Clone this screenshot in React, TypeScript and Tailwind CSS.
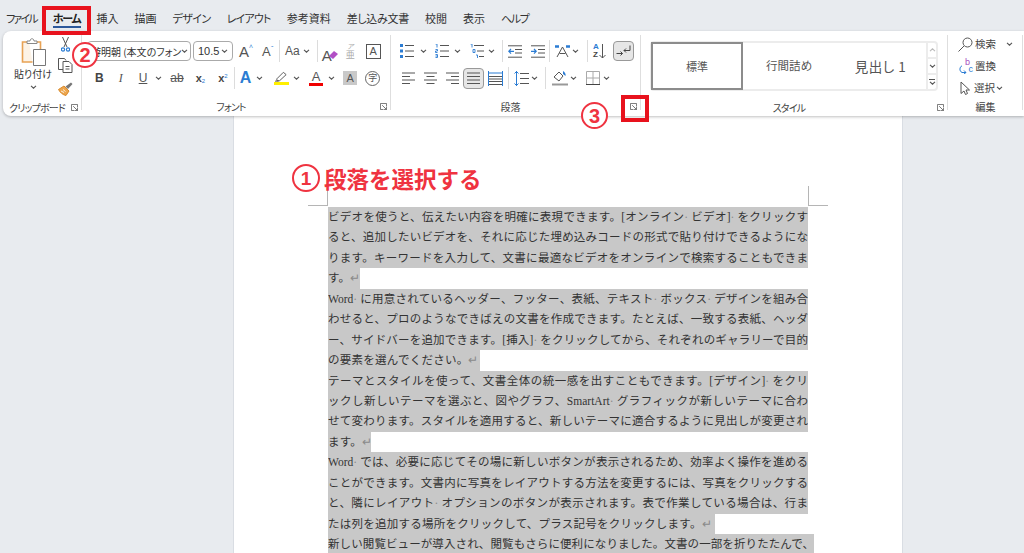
import type { ReactNode } from 'react';

const jp = "font-['Noto_Sans_CJK_JP',sans-serif] [font-feature-settings:'palt']";
const ui = "font-['Liberation_Sans','Noto_Sans_CJK_JP',sans-serif]";

function Caret({ className = '' }: { className?: string }) {
  return (
    <svg viewBox="0 0 7 4" className={`w-[7px] h-[4px] shrink-0 ${className}`} fill="none" stroke="#555" strokeWidth="1.1">
      <path d="M1 .8l2.5 2.4L6 .8" />
    </svg>
  );
}

function Sep({ className = '' }: { className?: string }) {
  return <div className={`w-px h-[22px] bg-[#dcdcdc] shrink-0 ${className}`} />;
}

function GroupSep() {
  return <div className="w-px h-[75px] mt-[4px] bg-[#dedede] shrink-0" />;
}

function Launcher({ className = '' }: { className?: string }) {
  return (
    <svg viewBox="0 0 8 8" className={`w-[7px] h-[7px] shrink-0 ${className}`} fill="none" stroke="#666" strokeWidth="1">
      <path d="M7.5 4V.5H.5v7H4M2.5 2.5l5 5M7.5 4.5v3h-3" />
    </svg>
  );
}

function Label({ text, kana = false }: { text: string; kana?: boolean }) {
  return (
    <div className="flex items-center h-[16px] mt-[9px]">
      <div className={`flex-1 text-center text-[10px] text-[#444] whitespace-nowrap ${kana ? 'tracking-[-0.8px]' : ''} ${jp}`}>{text}</div>
      <Launcher className="mr-[3px]" />
    </div>
  );
}

function Row({ children }: { children: ReactNode }) {
  return <div className="flex items-center h-[22px]">{children}</div>;
}

// paragraph icons
function Lines({ kind, className = '' }: { kind: 'left' | 'center' | 'right' | 'justify'; className?: string }) {
  const d = {
    left: 'M0 1h13M0 4.5h8M0 8h13M0 11.5h8',
    center: 'M0 1h13M2.5 4.5h8M0 8h13M2.5 11.5h8',
    right: 'M0 1h13M5 4.5h8M0 8h13M5 11.5h8',
    justify: 'M0 1h13M0 4.5h13M0 8h13M0 11.5h13',
  }[kind];
  return (
    <svg viewBox="0 0 13 13" className={`w-[13px] h-[13px] shrink-0 ${className}`} fill="none" stroke="#555" strokeWidth="1">
      <path d={d} />
    </svg>
  );
}

function ListIcon({ kind, className = '' }: { kind: 'bullet' | 'number' | 'multi'; className?: string }) {
  return (
    <svg viewBox="0 0 14 14" className={`w-[14px] h-[14px] shrink-0 ${className}`} fill="none">
      {kind === 'bullet' && (
        <>
          <path d="M0 0h3v3H0zM0 5.5h3v3H0zM0 11h3v3H0z" fill="#2b7cd3" />
          <path d="M5 1.5h9M5 7h9M5 12.5h9" stroke="#555" />
        </>
      )}
      {kind === 'number' && (
        <>
          <path d="M.5 0h1.5v3.5M.5 5.5h2v1.5h-2v1.5h2M.5 10.5h2v3h-2M.5 12h2" stroke="#2b7cd3" strokeWidth=".9" />
          <path d="M5 1.5h9M5 7h9M5 12.5h9" stroke="#555" />
        </>
      )}
      {kind === 'multi' && (
        <>
          <path d="M.5 0h1.5v3.5M3 5.5h2v3H3zM6 11h1.5v3" stroke="#2b7cd3" strokeWidth=".9" />
          <path d="M4 1.5h10M7 7h7M9 12.5h5" stroke="#555" />
        </>
      )}
    </svg>
  );
}

function IndentIcon({ out, className = '' }: { out?: boolean; className?: string }) {
  return (
    <svg viewBox="0 0 14 13" className={`w-[14px] h-[13px] shrink-0 ${className}`} fill="none">
      <path d="M0 .8h14M7 4.5h7M7 8h7M0 12.2h14" stroke="#555" />
      <path d={out ? 'M6 6.3H.8M3 4L.8 6.3 3 8.6' : 'M0 6.3h5.2M3 4l2.2 2.3L3 8.6'} stroke="#2b7cd3" strokeWidth="1.2" />
    </svg>
  );
}

function PasteIcon() {
  return (
    <svg viewBox="0 0 25 28" className="w-[25px] h-[28px]" fill="none">
      <path d="M8 4H1.5v20h10" stroke="#e8a254" strokeWidth="1.6" fill="#fdf3e6" />
      <path d="M14 4h5.5v8" stroke="#e8a254" strokeWidth="1.6" />
      <path d="M6 5.5V3h3c0-3 4-3 4 0h3v2.5z" fill="#fff" stroke="#888" />
      <path d="M12.5 11.5h12v16h-12z" fill="#fff" stroke="#777" />
    </svg>
  );
}

function ScissorsIcon() {
  return (
    <svg viewBox="0 0 9 15" className="w-[9px] h-[15px]" fill="none">
      <path d="M1.5 0l4.5 10M7.5 0L3 10" stroke="#555" strokeWidth="1" />
      <circle cx="2" cy="12.5" r="1.6" stroke="#2b7cd3" strokeWidth="1.2" />
      <circle cx="7" cy="12.5" r="1.6" stroke="#2b7cd3" strokeWidth="1.2" />
    </svg>
  );
}

function CopyIcon() {
  return (
    <svg viewBox="0 0 15 15" className="w-[15px] h-[15px]" fill="none" stroke="#555">
      <path d="M5 11.5H.5V.5h6l1.5 2" fill="#fff" />
      <path d="M5 3.5h6l3 3v8H5z" fill="#fff" />
      <path d="M7.5 8.5h4M7.5 11h4" />
    </svg>
  );
}

function BrushIcon() {
  return (
    <svg viewBox="0 0 15 14" className="w-[15px] h-[14px]" fill="none">
      <path d="M.5 7.5L6 4l5 5-3 4.5C5 13 2 10.5.5 7.5z" fill="#eda64d" stroke="#d88a2d" />
      <path d="M7.5 4.5L13 .5l1.5 1.5-4.5 5z" fill="#777" />
      <path d="M3 9l3 1.5M5 7.5l2.5 2" stroke="#fff" strokeWidth=".8" />
    </svg>
  );
}

function A({ className = '', children = 'A' }: { className?: string; children?: ReactNode }) {
  return <span className={`${ui} leading-none shrink-0 ${className}`}>{children}</span>;
}

function Clipboard() {
  return (
    <div className="w-[78px] shrink-0 flex flex-col pt-[7px]">
      <div className="flex h-[61px] pl-[7px]">
        <div className="w-[46px] flex flex-col items-center">
          <PasteIcon />
          <div className={`text-[10px] leading-[14px] mt-[1px] text-[#333] whitespace-nowrap ${jp}`}>貼り付け</div>
          <Caret className="mt-[4px]" />
        </div>
        <div className="w-[18px] flex flex-col items-center -mt-[1px]">
          <ScissorsIcon />
          <div className="mt-[6px]">
            <CopyIcon />
          </div>
          <div className="mt-[9px]">
            <BrushIcon />
          </div>
        </div>
      </div>
      <div className="-mt-[9px]">
        <Label text="クリップボード" kana />
      </div>
    </div>
  );
}

function Font() {
  return (
    <div className="w-[308px] shrink-0 flex flex-col pt-[9px]">
      <div className="flex flex-col gap-[5px]">
        <Row>
          <div className={`ml-[5px] w-[104px] h-[20px] border border-[#aaa] rounded-[4px] bg-white flex items-center justify-between pl-[3px] pr-[4px] text-[10px] text-[#333] whitespace-nowrap ${jp}`}>
            <span>游明朝 (本文のフォン</span>
            <Caret />
          </div>
          <div className={`ml-[2px] w-[40px] h-[20px] border border-[#aaa] rounded-[4px] bg-white flex items-center justify-between px-[4px] text-[11px] text-[#333] ${ui}`}>
            10.5
            <Caret />
          </div>
          <div className="ml-[6px] w-[16px] flex items-start text-[#555]">
            <A className="text-[15px]" />
            <span className="text-[#2b7cd3] text-[7px] leading-none">^</span>
          </div>
          <div className="ml-[7px] w-[14px] flex items-start text-[#555]">
            <A className="text-[13px]" />
            <span className="text-[#2b7cd3] text-[7px] leading-none">ˇ</span>
          </div>
          <Sep className="ml-[3px]" />
          <A className="ml-[5px] text-[12px] text-[#555]">Aa</A>
          <Caret className="ml-[3px]" />
          <Sep className="ml-[7px]" />
          <div className="ml-[4px] w-[16px] h-[16px] relative">
            <A className="text-[15px] text-[#555]" />
            <svg viewBox="0 0 9 8" className="absolute right-0 bottom-0 w-[9px] h-[8px]">
              <path d="M0 5l5-5 4 3-5 5z" fill="#b14fc5" />
            </svg>
          </div>
          <div className="ml-[7px] w-[11px] flex flex-col items-center text-[#aaa]">
            <A className="text-[7px] italic">ア</A>
            <A className={`text-[9px] ${jp}`}>亜</A>
          </div>
          <div className="ml-[10px] w-[15px] h-[15px] border border-[#555] flex items-center justify-center">
            <A className="text-[11px] text-[#555]" />
          </div>
        </Row>
        <Row>
          <A className="ml-[13px] text-[12px] font-bold text-[#444]">B</A>
          <span className="ml-[15px] font-['Liberation_Serif',serif] italic text-[12px] leading-none text-[#555]">I</span>
          <A className="ml-[16px] text-[12px] underline text-[#555]">U</A>
          <Caret className="ml-[8px]" />
          <A className="ml-[8px] text-[12px] line-through text-[#555]">ab</A>
          <div className="ml-[12px] flex items-end">
            <A className="text-[11px] font-bold text-[#444]">x</A>
            <span className={`${ui} text-[6px] leading-none text-[#2b7cd3]`}>2</span>
          </div>
          <div className="ml-[13px] flex items-start">
            <A className="text-[11px] font-bold text-[#444]">x</A>
            <span className={`${ui} text-[6px] leading-none text-[#2b7cd3]`}>2</span>
          </div>
          <Sep className="ml-[6px]" />
          <A className="ml-[5px] text-[16px] font-bold text-[#2b7cd3]" />
          <Caret className="ml-[5px]" />
          <div className="ml-[11px] w-[15px] flex flex-col items-center">
            <svg viewBox="0 0 14 11" className="w-[13px] h-[11px]" fill="none" stroke="#555">
              <path d="M2 8l7-7 3 2.5L5 10H2z" />
              <path d="M0 10.5h4" />
            </svg>
            <div className="w-[15px] h-[3px] bg-[#ffef00]" />
          </div>
          <Caret className="ml-[4px]" />
          <div className="ml-[9px] w-[14px] flex flex-col items-center">
            <A className="text-[13px] text-[#555]" />
            <div className="w-[14px] h-[3px] bg-[#f00000]" />
          </div>
          <Caret className="ml-[5px]" />
          <div className="ml-[8px] w-[14px] h-[14px] bg-[#c9c9c9] flex items-center justify-center">
            <A className="text-[11px] text-[#555]" />
          </div>
          <div className={`ml-[8px] w-[15px] h-[15px] rounded-full border border-[#666] flex items-center justify-center text-[9px] text-[#555] ${jp}`}>字</div>
        </Row>
      </div>
      <Label text="フォント" kana />
    </div>
  );
}

function Paragraph() {
  return (
    <div className="w-[249px] shrink-0 flex flex-col pt-[9px]">
      <div className="flex flex-col gap-[5px]">
        <Row>
          <ListIcon kind="bullet" className="ml-[9px]" />
          <Caret className="ml-[6px]" />
          <ListIcon kind="number" className="ml-[8px]" />
          <Caret className="ml-[5px]" />
          <ListIcon kind="multi" className="ml-[9px]" />
          <Caret className="ml-[4px]" />
          <Sep className="ml-[7px]" />
          <IndentIcon out className="ml-[5px]" />
          <IndentIcon className="ml-[9px]" />
          <Sep className="ml-[4px]" />
          <svg viewBox="0 0 15 14" className="ml-[5px] w-[15px] h-[14px] shrink-0" fill="none">
            <path d="M2 13L7.5 3 13 13M4.5 9.5h6" stroke="#555" />
            <path d="M0 2.5h4M11 2.5h4" stroke="#2b7cd3" strokeWidth="2.4" />
          </svg>
          <Caret className="ml-[2px]" />
          <Sep className="ml-[8px]" />
          <div className="ml-[5px] w-[15px] h-[16px] flex items-center">
            <div className={`${ui} text-[8px] leading-[8px] font-bold`}>
              <div className="text-[#2b7cd3]">A</div>
              <div className="text-[#444]">Z</div>
            </div>
            <svg viewBox="0 0 7 15" className="w-[7px] h-[15px]" fill="none" stroke="#555">
              <path d="M3.5 0v14M.5 11l3 3 3-3" />
            </svg>
          </div>
          <div className="ml-[5px] w-[21px] h-[20px] bg-[#e6e6e6] border border-[#999] rounded-[4px] flex items-center justify-center">
            <svg viewBox="0 0 15 13" className="w-[15px] h-[13px]" fill="none" stroke="#444">
              <path d="M14 .5v5H8M10 3.5L8 5.5l2 2M.5 8.5h6M4.5 6.5l2 2-2 2" />
            </svg>
          </div>
        </Row>
        <Row>
          <Lines kind="left" className="ml-[11px]" />
          <Lines kind="center" className="ml-[9px]" />
          <Lines kind="right" className="ml-[9px]" />
          <div className="ml-[4px] w-[21px] h-[21px] bg-[#e6e6e6] border border-[#999] rounded-[4px] flex items-center justify-center shrink-0">
            <Lines kind="justify" />
          </div>
          <svg viewBox="0 0 15 15" className="ml-[4px] w-[15px] h-[15px] shrink-0" fill="none">
            <path d="M1 5.5h13M1 8h13M1 10.5h13M1 13.5h13" stroke="#555" />
            <path d="M.5 0v15M14.5 0v15M1 2h13" stroke="#2b7cd3" />
          </svg>
          <Sep className="ml-[5px]" />
          <svg viewBox="0 0 15 15" className="ml-[5px] w-[15px] h-[15px] shrink-0" fill="none">
            <path d="M6 2.5h9M6 7.5h9M6 12.5h9" stroke="#555" />
            <path d="M2.5 0v15M.5 2.5l2-2 2 2M.5 12.5l2 2 2-2" stroke="#2b7cd3" />
          </svg>
          <Caret className="ml-[2px]" />
          <Sep className="ml-[7px]" />
          <svg viewBox="0 0 16 16" className="ml-[6px] w-[16px] h-[16px] shrink-0" fill="none">
            <path d="M2 7l5-5 4 4-4 5z" stroke="#555" />
            <path d="M11 1c2 1 3 3 2.5 5L11 4z" fill="#2b7cd3" />
            <path d="M0 14.5h16" stroke="#999" strokeWidth="2" />
          </svg>
          <Caret className="ml-[2px]" />
          <svg viewBox="0 0 14 14" className="ml-[9px] w-[14px] h-[14px] shrink-0" fill="none">
            <path d="M.5.5h13M7 .5v13M.5 7h13M.5.5v13M13.5.5v13" stroke="#aaa" />
            <path d="M0 13.5h14" stroke="#444" />
          </svg>
          <Caret className="ml-[3px]" />
        </Row>
      </div>
      <Label text="段落" />
    </div>
  );
}

function Styles() {
  return (
    <div className="w-[306px] shrink-0 flex flex-col pt-[10px]">
      <div className="ml-[9px] w-[288px] h-[50px] border-2 border-[#ececec] rounded-[4px] flex">
        <div className={`w-[92px] -ml-[1px] -my-px border-2 border-[#8c8c8c] flex items-center justify-center text-[11px] text-[#555] ${jp}`}>標準</div>
        <div className={`w-[92px] flex items-center justify-center text-[11.5px] text-[#555] ${jp}`}>行間詰め</div>
        <div className={`w-[91px] flex items-center justify-center text-[13.5px] tracking-[0.5px] text-[#555] ${jp}`}>見出し 1</div>
        <div className="flex-1 border-l-2 border-[#ececec] flex flex-col">
          <div className="flex-1 flex items-center justify-center">
            <Caret className="rotate-180 opacity-40" />
          </div>
          <div className="flex-1 border-y-2 border-[#ececec] flex items-center justify-center">
            <Caret />
          </div>
          <div className="flex-1 flex flex-col items-center justify-center">
            <div className="w-[6px] h-px bg-[#555] mb-px" />
            <Caret />
          </div>
        </div>
      </div>
      <div className="-mt-[1px]">
        <Label text="スタイル" kana />
      </div>
    </div>
  );
}

function Edit() {
  const text = `text-[10.5px] leading-none text-[#444] ${jp}`;
  return (
    <div className="w-[74px] shrink-0 flex flex-col pt-[5px]">
      <div className="h-[16px] flex items-center">
        <svg viewBox="0 0 15 15" className="ml-[10px] w-[15px] h-[15px] shrink-0" fill="none" stroke="#555">
          <circle cx="9.5" cy="5.5" r="4.5" />
          <path d="M6 9l-5.5 5.5" />
        </svg>
        <span className={`ml-[2px] ${text}`}>検索</span>
        <Caret className="ml-[10px]" />
      </div>
      <div className="h-[16px] mt-[6px] flex items-center">
        <div className={`ml-[11px] w-[14px] h-[15px] relative ${ui}`}>
          <span className="absolute left-[6px] -top-[1px] text-[9px] leading-none text-[#a64dc0]">b</span>
          <span className="absolute right-0 bottom-0 text-[9px] leading-none text-[#2b7cd3]">c</span>
          <svg viewBox="0 0 8 9" className="absolute left-0 bottom-0 w-[8px] h-[9px]" fill="none" stroke="#2b7cd3">
            <path d="M3 .8C.5 2 0 6 3 7.5h4M5 5.5l2 2-2 1.5" />
          </svg>
        </div>
        <span className={`ml-[2px] ${text}`}>置換</span>
      </div>
      <div className="h-[16px] mt-[6px] flex items-center">
        <svg viewBox="0 0 11 14" className="ml-[12px] w-[11px] h-[14px] shrink-0" fill="none" stroke="#555">
          <path d="M1 1l8.5 8H6l1.5 3.5-2 1L4 10l-3 2.5z" />
        </svg>
        <span className={`ml-[3px] ${text}`}>選択</span>
        <Caret className="ml-[1px]" />
      </div>
      <div className={`h-[16px] mt-[3px] text-center text-[10px] leading-[16px] text-[#444] pl-[1px] ${jp}`}>編集</div>
    </div>
  );
}

const lines: { t: string; w: string; fit?: boolean }[] = [
  { t: 'ビデオを使うと、伝えたい内容を明確に表現できます。[オンライン· ビデオ]· をクリックす', w: 'w-[480px]', fit: true },
  { t: 'ると、追加したいビデオを、それに応じた埋め込みコードの形式で貼り付けできるようにな', w: 'w-[480px]', fit: true },
  { t: 'ります。キーワードを入力して、文書に最適なビデオをオンラインで検索することもできま', w: 'w-[480px]', fit: true },
  { t: 'す。↵', w: 'w-[32px]' },
  { t: 'Word· に用意されているヘッダー、フッター、表紙、テキスト· ボックス· デザインを組み合', w: 'w-[480px]', fit: true },
  { t: 'わせると、プロのようなできばえの文書を作成できます。たとえば、一致する表紙、ヘッダ', w: 'w-[480px]', fit: true },
  { t: 'ー、サイドバーを追加できます。[挿入]· をクリックしてから、それぞれのギャラリーで目的', w: 'w-[480px]', fit: true },
  { t: 'の要素を選んでください。↵', w: 'w-[152px]' },
  { t: 'テーマとスタイルを使って、文書全体の統一感を出すこともできます。[デザイン]· をクリ', w: 'w-[480px]', fit: true },
  { t: 'ックし新しいテーマを選ぶと、図やグラフ、SmartArt· グラフィックが新しいテーマに合わ', w: 'w-[480px]', fit: true },
  { t: 'せて変わります。スタイルを適用すると、新しいテーマに適合するように見出しが変更され', w: 'w-[480px]', fit: true },
  { t: 'ます。↵', w: 'w-[43px]' },
  { t: 'Word· では、必要に応じてその場に新しいボタンが表示されるため、効率よく操作を進める', w: 'w-[480px]', fit: true },
  { t: 'ことができます。文書内に写真をレイアウトする方法を変更するには、写真をクリックする', w: 'w-[480px]', fit: true },
  { t: 'と、隣にレイアウト· オプションのボタンが表示されます。表で作業している場合は、行ま', w: 'w-[480px]', fit: true },
  { t: 'たは列を追加する場所をクリックして、プラス記号をクリックします。↵', w: 'w-[387px]' },
  { t: '新しい閲覧ビューが導入され、閲覧もさらに便利になりました。文書の一部を折りたたんで、', w: 'w-[486px]', fit: true },
];

function Page() {
  return (
    <div className="ml-[233px] w-[670px] flex-1 bg-white border-x border-[#d9dde3] relative">
      <div className="absolute left-[74px] top-[70px] w-[20px] h-[20px] border-r border-b border-[#b5b5b5]" />
      <div className="absolute left-[574px] top-[70px] w-[20px] h-[20px] border-l border-b border-[#b5b5b5]" />
      <div className="pt-[47px] pb-[1px] pl-[58px] relative">
        <div className="h-[30px] flex items-center text-[#ef3340]">
          <div className={`w-[28px] h-[28px] rounded-full border-[2.5px] border-[#ef3340] flex items-center justify-center text-[19px] font-bold leading-none ${ui}`}>1</div>
          <div className="ml-[4px] text-[22.5px] font-bold leading-none whitespace-nowrap font-['Noto_Sans_CJK_JP',sans-serif]">段落を選択する</div>
        </div>
      </div>
      <div className="mt-[13px] ml-[94px] flex flex-col font-['Liberation_Serif','Noto_Sans_CJK_JP',serif] text-[11.5px] text-[#333]">
        {lines.map((l, i) => (
          <div
            key={i}
            className={`${l.w} h-[20.45px] leading-[20.45px] bg-[#c8c8c8] ${l.fit ? '[text-align:justify] [text-align-last:justify] overflow-hidden' : 'whitespace-nowrap tracking-[0.25px]'}`}
          >
            {l.t.split(/([·↵])/).map((part, j) =>
              part === '·' || part === '↵' ? (
                <span key={j} className="text-[#8a8a8a]">{part}</span>
              ) : (
                part
              ),
            )}
          </div>
        ))}
      </div>
    </div>
  );
}

export default function App() {
  const menu = [
    { label: 'ファイル', kana: 'tracking-[-1.85px]' },
    { label: 'ホーム', kana: 'tracking-[-1.2px]' },
    { label: '挿入', kana: '' },
    { label: '描画', kana: '' },
    { label: 'デザイン', kana: 'tracking-[-0.55px]' },
    { label: 'レイアウト', kana: 'tracking-[-0.8px]' },
    { label: '参考資料', kana: '' },
    { label: '差し込み文書', kana: 'tracking-[-0.3px]' },
    { label: '校閲', kana: '' },
    { label: '表示', kana: '' },
    { label: 'ヘルプ', kana: 'tracking-[-1.3px]' },
  ];
  return (
    <div className="w-[1024px] h-[553px] bg-[#e8ebef] overflow-hidden relative flex flex-col">
      <div className={`h-[31px] shrink-0 flex items-center gap-[16px] pl-[6px] pt-[5px] text-[11px] leading-[16px] text-[#333] ${jp}`}>
        {menu.map((m) =>
          m.label === 'ホーム' ? (
            <div key={m.label} className={`relative font-bold text-[#222] ${m.kana}`}>
              {m.label}
              <div className="absolute left-0 right-0 -bottom-[2px] h-[2px] bg-[#2b579a]" />
            </div>
          ) : (
            <div key={m.label} className={`whitespace-nowrap ${m.kana}`}>{m.label}</div>
          ),
        )}
      </div>
      <div className="ml-[3px] h-[85px] shrink-0 bg-white rounded-l-[8px] shadow-[0_1px_3px_rgba(0,0,0,0.25)] flex relative z-10">
        <Clipboard />
        <GroupSep />
        <Font />
        <GroupSep />
        <Paragraph />
        <GroupSep />
        <Styles />
        <GroupSep />
        <Edit />
        <GroupSep />
      </div>
      <Page />

      {/* annotations */}
      <div className="absolute z-20 left-[42px] top-[6px] w-[49px] h-[29px] border-[4px] border-[#e8121d]" />
      <div className="absolute z-20 left-[621px] top-[95px] w-[28px] h-[27px] border-[4px] border-[#e8121d]" />
      <div className={`absolute z-20 left-[72px] top-[42px] w-[26px] h-[26px] rounded-full bg-white border-[2.5px] border-[#ef3340] flex items-center justify-center text-[20px] font-bold leading-none text-[#ef3340] ${ui}`}>2</div>
      <div className={`absolute z-20 left-[581px] top-[102px] w-[27px] h-[27px] rounded-full bg-white border-[2.5px] border-[#ef3340] flex items-center justify-center text-[20px] font-bold leading-none text-[#ef3340] ${ui}`}>3</div>
    </div>
  );
}
